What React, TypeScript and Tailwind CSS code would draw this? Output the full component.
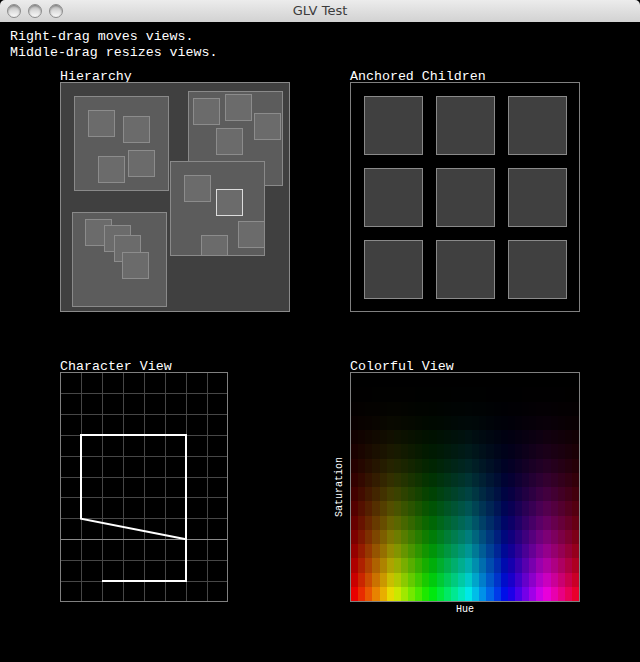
import React from 'react';

const mono = { fontFamily: '"Liberation Mono", "DejaVu Sans Mono", monospace' };

type Box = { x: number; y: number; hot?: boolean };
type Parent = { x: number; y: number; kids: Box[] };

// positions relative to the parent's inner edge
const parents: Parent[] = [
  { x: 13, y: 13, kids: [{ x: 13, y: 13 }, { x: 48, y: 19 }, { x: 23, y: 59 }, { x: 53, y: 53 }] },
  { x: 127, y: 8, kids: [{ x: 4, y: 6 }, { x: 36, y: 2 }, { x: 65, y: 21 }, { x: 27, y: 36 }] },
  { x: 109, y: 78, kids: [{ x: 13, y: 13 }, { x: 45, y: 27, hot: true }, { x: 67, y: 59 }, { x: 30, y: 73 }] },
  { x: 11, y: 129, kids: [{ x: 12, y: 6 }, { x: 31, y: 12 }, { x: 41, y: 22 }, { x: 49, y: 39 }] },
];

function hsv(h: number, s: number, v: number) {
  const f = (n: number) => {
    const k = (n + h / 60) % 6;
    return v - v * s * Math.max(0, Math.min(k, 4 - k, 1));
  };
  return `rgb(${Math.round(f(5) * 255)},${Math.round(f(3) * 255)},${Math.round(f(1) * 255)})`;
}

function Label({ children }: { children: React.ReactNode }) {
  return (
    <div className="h-[10px] leading-[10px] text-[13.3px] text-white whitespace-pre" style={mono}>
      {children}
    </div>
  );
}

function Hierarchy() {
  return (
    <div>
      <Label>Hierarchy</Label>
      <div className="relative w-[230px] h-[230px] border border-[#8a8a8a] bg-[#404040] overflow-hidden">
        {parents.map((p, i) => (
          <div
            key={i}
            className="absolute w-[95px] h-[95px] border border-[#8a8a8a] bg-[#5c5c5c] overflow-hidden"
            style={{ left: p.x, top: p.y }}
          >
            {p.kids.map((k, j) => (
              <div
                key={j}
                className={`absolute w-[27px] h-[27px] border bg-[#6b6b6b] ${k.hot ? 'border-[#dcdcdc]' : 'border-[#8c8c8c]'}`}
                style={{ left: k.x, top: k.y }}
              />
            ))}
          </div>
        ))}
      </div>
    </div>
  );
}

function Anchored() {
  return (
    <div>
      <Label>Anchored Children</Label>
      <div className="w-[230px] h-[230px] border border-[#808080] bg-black p-[13px]">
        <div className="grid grid-cols-[59px_59px_59px] grid-rows-[59px_59px_59px] gap-[13px]">
          {Array.from({ length: 9 }).map((_, i) => (
            <div key={i} className="border border-[#8a8a8a] bg-[#404040]" />
          ))}
        </div>
      </div>
    </div>
  );
}

function CharacterView() {
  const cols = [1, 2, 3, 4, 5, 6, 7].map((k) => 21 * k - 1);
  const rows = Array.from({ length: 10 }, (_, i) => (230 / 11) * (i + 1) - 1);
  return (
    <div>
      <Label>Character View</Label>
      <div className="w-[168px] h-[230px] border border-[#808080] bg-black">
        <svg width="166" height="228" className="block">
          {cols.map((x) => (
            <line key={x} x1={x + 0.5} y1={0} x2={x + 0.5} y2={228} stroke="#474747" strokeWidth={1} />
          ))}
          {rows.map((y, i) => (
            <line
              key={i}
              x1={0}
              y1={Math.round(y) + 0.5}
              x2={166}
              y2={Math.round(y) + 0.5}
              stroke={i === 7 ? '#8a8a8a' : '#474747'}
              strokeWidth={1}
            />
          ))}
          <polyline
            points="41,208 125,208 125,62 20,62 20,145.7 125,166.3"
            fill="none"
            stroke="#ffffff"
            strokeWidth={2}
            strokeLinejoin="miter"
          />
        </svg>
      </div>
    </div>
  );
}

function ColorfulView() {
  const cells = [];
  for (let r = 0; r < 16; r++) {
    const t = r / 15;
    for (let c = 0; c < 32; c++) {
      cells.push(<div key={`${r}-${c}`} style={{ backgroundColor: hsv((c / 32) * 360, 1, t * t * 0.91) }} />);
    }
  }
  return (
    <div>
      <Label>Colorful View</Label>
      <div className="relative">
        <div className="w-[230px] h-[230px] border border-[#808080] bg-black grid grid-cols-[repeat(32,1fr)] grid-rows-[repeat(16,1fr)]">
          {cells}
        </div>
        <div className="absolute left-[-16px] top-0 h-[230px] w-[12px] flex items-center justify-center">
          <span className="block -rotate-90 text-[10px] leading-[12px] text-white whitespace-nowrap" style={mono}>
            Saturation
          </span>
        </div>
        <div className="mt-[2px] text-center text-[10px] leading-[12px] text-white" style={mono}>
          Hue
        </div>
      </div>
    </div>
  );
}

function TrafficLight() {
  return (
    <div className="w-[14px] h-[14px] rounded-full border border-[#8d8d8d] bg-linear-to-b from-[#b4b4b4] via-[#dedede] to-[#fafafa] shadow-[inset_0_1px_2px_rgba(0,0,0,0.35)]" />
  );
}

export default function App() {
  return (
    <div className="w-[640px] h-[662px] bg-black overflow-hidden">
      <div className="relative h-[22px] rounded-t-[5px] bg-linear-to-b from-[#ececec] to-[#d2d2d2] flex items-center">
        <div className="flex items-center gap-[7px] pl-[7px]">
          <TrafficLight />
          <TrafficLight />
          <TrafficLight />
        </div>
        <div
          className="absolute inset-0 flex items-center justify-center text-[13px] text-[#3c3c3c]"
          style={{ fontFamily: '"DejaVu Sans", "Liberation Sans", sans-serif' }}
        >
          GLV Test
        </div>
      </div>
      <div className="pl-[10px] pt-[7px] text-[13.3px] leading-[16px] text-white" style={mono}>
        <div>Right-drag moves views.</div>
        <div>Middle-drag resizes views.</div>
      </div>
      <div className="pl-[60px] pt-[11px] grid grid-cols-[230px_230px] gap-x-[60px] gap-y-[50px] items-start">
        <Hierarchy />
        <Anchored />
        <CharacterView />
        <ColorfulView />
      </div>
    </div>
  );
}
